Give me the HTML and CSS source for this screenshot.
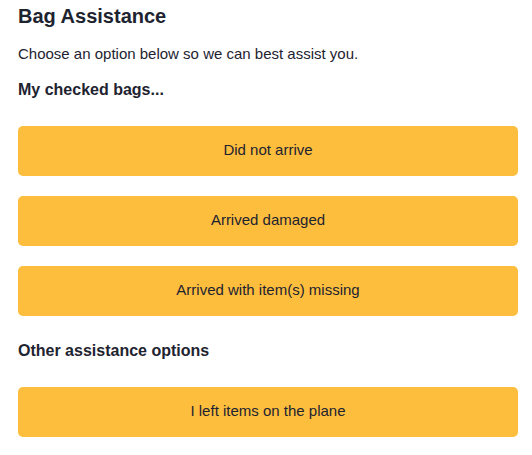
FILE: index.html
```html
<!DOCTYPE html>
<html>
<head>
<meta charset="utf-8">
<link rel="stylesheet" href="styles.css">
</head>
<body>
<main class="page">
  <h1 class="title">Bag Assistance</h1>
  <p class="intro">Choose an option below so we can best assist you.</p>
  <h2 class="section">My checked bags...</h2>
  <div class="options">
    <button class="option">Did not arrive</button>
    <button class="option">Arrived damaged</button>
    <button class="option">Arrived with item(s) missing</button>
  </div>
  <h2 class="section section-other">Other assistance options</h2>
  <div class="options">
    <button class="option">I left items on the plane</button>
  </div>
</main>
</body>
</html>
```
FILE: styles.css
```css
html, body {
  margin: 0;
  padding: 0;
  background: #ffffff;
}
.page {
  font-family: "Liberation Sans", Arial, sans-serif;
  color: #1e2330;
  width: 500px;
  padding: 4px 0 0 18px;
}
.title {
  margin: 0;
  font-size: 20px;
  line-height: 24px;
  font-weight: bold;
}
.intro {
  margin: 17px 0 0;
  font-size: 15px;
  line-height: 17px;
}
.section {
  margin: 19px 0 0;
  font-size: 16px;
  line-height: 18px;
  font-weight: bold;
}
.section-other {
  margin-top: 26px;
}
.options {
  display: flex;
  flex-direction: column;
  gap: 20px;
  margin-top: 27px;
}
.option {
  display: block;
  width: 500px;
  height: 50px;
  border: none;
  border-radius: 5px;
  background: #fdbe3e;
  color: #1e2330;
  font-family: "Liberation Sans", Arial, sans-serif;
  font-size: 15px;
  text-align: center;
  padding: 0 0 3px;
}
```
